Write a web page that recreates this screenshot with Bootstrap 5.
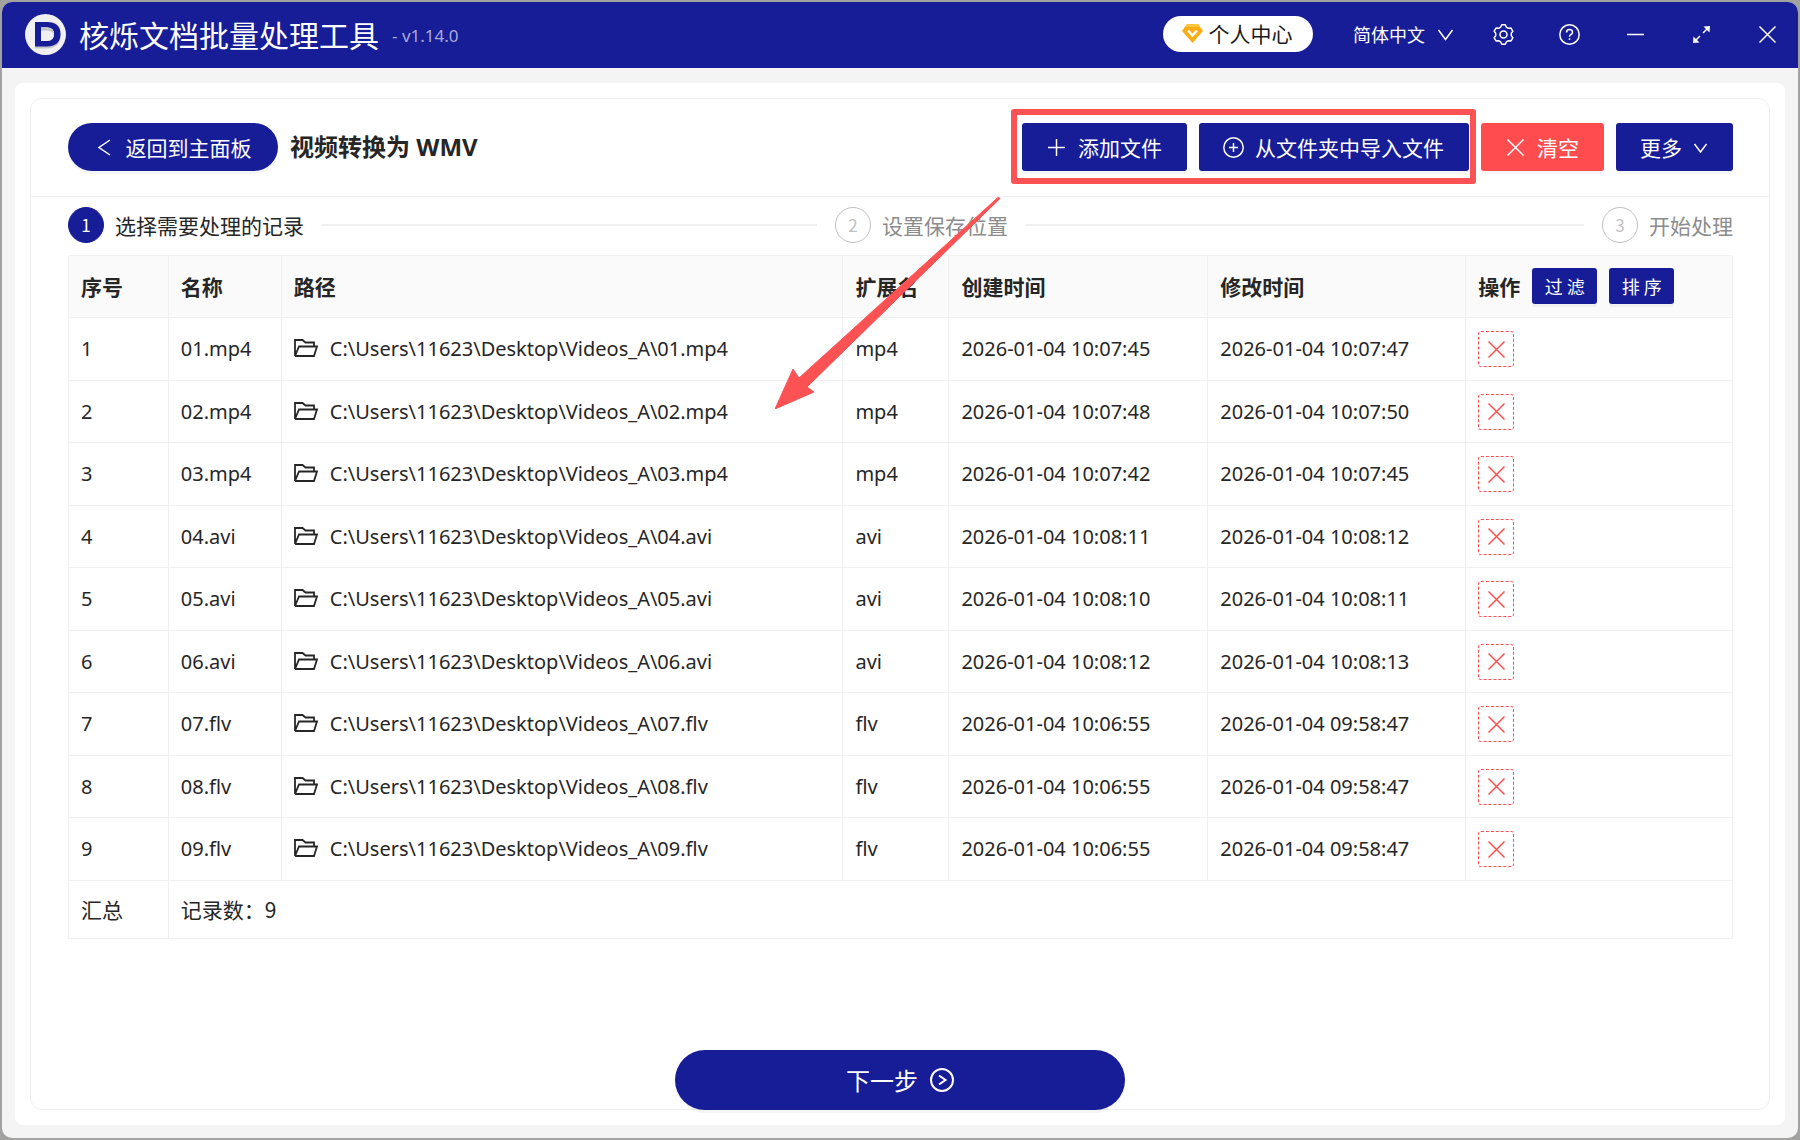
<!DOCTYPE html>
<html lang="zh-CN">
<head>
<meta charset="utf-8">
<meta name="viewport" content="width=device-width, initial-scale=1">
<title>核烁文档批量处理工具</title>
<link href="https://cdn.jsdelivr.net/npm/bootstrap@5.3.0/dist/css/bootstrap.min.css" rel="stylesheet">
<style>
:root { --brand: #171c97; --danger: #ff4d4f; --line: #f0f0f0; --ink: #262626; }
body { font-family: "Noto Sans", "Noto Sans CJK SC", sans-serif; font-size: 20px; line-height: 30px; color: var(--ink); background: #a2a2a0; padding: 2px; min-height: 100vh; display: flex; }
.zh { font-family: "Noto Sans CJK SC", sans-serif; font-size: 21px; }
svg { flex: none; display: block; fill: none; stroke: currentColor; stroke-width: 1.5; }
.app-window { background: #f4f4f4; border-radius: 10px; overflow: hidden; }
.title-bar { background: var(--brand); height: 66px; padding: 0 20px 2px 23px; }
.app-name { font-size: 30px; line-height: 40px; margin: 0 0 0 13px; font-weight: 400; }
.app-version { font-size: 17px; line-height: 24px; color: #a9abda; margin: 4px 0 0 13px; }
.member-btn { height: 36px; width: 150px; background: #fff; border: 0; border-radius: 18px; color: #1a1a1a; gap: 6px; padding: 0 2px 2px 0; }
.lang-box { margin: 0 37px 0 40px; gap: 10px; }
.lang-box select { appearance: none; background: none; border: 0; color: #fff; padding: 0; width: 72px; font-size: 18px; line-height: 28px; }
.tool-btns { gap: 45px; }
.tool-btns button { border: 0; padding: 0; background: none; color: #fff; }
.main-area { padding: 15px 13px 13px; }
.sheet { background: #fff; border-radius: 8px; padding: 15px; }
.panel { border: 1px solid var(--line); border-radius: 12px; }
.panel-top { padding: 24px 36px 25px 37px; border-bottom: 1px solid var(--line); gap: 12px; }
.panel-title { font-size: 24px; line-height: 32px; font-weight: 700; margin: 0; }
.act { height: 48px; padding: 0 24px; gap: 11px; border: 0; border-radius: 3px; color: #fff; background: var(--brand); box-shadow: 0 3px 0 rgba(0,0,0,.04); white-space: nowrap; line-height: 32px; }
.act { padding-right: 25px; }
.act-danger { background: var(--danger); }
.act-back { border-radius: 24px; min-width: 210px; }
.marked { gap: 12px; }
.marked::after { content: ""; position: absolute; inset: -14px -7px -13px -11px; border: 6px solid #fd5254; border-radius: 3px; pointer-events: none; }
.flow-steps { padding: 10px 36px 12px 37px; gap: 18px; color: #8c8c8c; }
.flow-step { gap: 11px; }
.flow-step .rule { height: 2px; background: var(--line); margin-left: 7px; }
.flow-num { width: 36px; height: 36px; border: 1px solid #bfbfbf; border-radius: 50%; font-size: 17px; color: #bfbfbf; flex: none; }
.is-active { color: var(--ink); }
.is-active .flow-num { background: var(--brand); border-color: var(--brand); color: #fff; }
.table-area { padding: 0 36px 24px 37px; }
.records { width: 100%; table-layout: fixed; border-collapse: separate; border-spacing: 0; border: 1px solid var(--line); border-width: 1px 0 0 1px; border-radius: 3px 3px 0 0; }
.records th, .records td { padding: 0 12px; border: 0 solid var(--line); border-width: 0 1px 1px 0; vertical-align: middle; white-space: nowrap; }
.records thead tr { height: 62px; }
.records th { background: #fafafa; font-weight: 700; padding-bottom: 2px; }
.records tbody tr:nth-child(odd) { height: 63px; }
.records tbody tr:nth-child(even) { height: 62px; }
.records tfoot tr { height: 58px; }
.records tfoot td { padding-bottom: 2px; }
.mini { height: 36px; width: 65px; border: 0; border-radius: 3px; background: var(--brand); color: #fff; font-size: 18px; line-height: 28px; padding: 0; box-shadow: 0 3px 0 rgba(0,0,0,.04); }
.del { width: 36px; height: 36px; border: 1px dashed var(--danger); border-radius: 3px; background: none; color: var(--danger); padding: 0; }
.path-link { color: inherit; text-decoration: none; gap: 12px; }
.path-link svg { margin-bottom: 2px; }
.next-btn { width: 450px; max-width: 100%; height: 60px; border: 0; border-radius: 30px; background: var(--brand); color: #fff; font-size: 24px; gap: 12px; margin: auto auto -1px; box-shadow: 0 3px 0 rgba(0,0,0,.04); }
.guide-arrow { position: absolute; left: 744px; top: 98px; pointer-events: none; z-index: 2; }
</style>
</head>
<body>
<svg width="0" height="0" class="position-absolute" aria-hidden="true">
  <symbol id="cross" viewBox="0 0 21 21"><path d="M2.500 2.500l16 16M18.500 2.500l-16 16"/></symbol>
  <symbol id="folder" viewBox="0 0 24 18"><path d="M20 7V3.500H11.500L8.500 1H1V17M1 17H20L23 7.500H5L1 17" stroke-width="1.8"/></symbol>
</svg>

<div class="app-window flex-grow-1 d-flex flex-column">
  <header class="title-bar d-flex align-items-center text-white">
    <svg width="41" height="41" viewBox="0 0 41 41" role="img" aria-label="Logo">
      <circle cx="20.500" cy="20.500" r="20.500" fill="#f0f0f2" stroke="none"/>
      <path d="M10 11H23Q35.500 11 35.500 22T23 34.500H10Z" fill="#c5c5c9" stroke="none"/>
      <path fill-rule="evenodd" d="M10 8H22Q35.500 8 35.500 20T22 32.500H10ZM16 13.500V27H22Q29 27 29 20T22 13.500Z" fill="#171c97" stroke="none"/>
      <path d="M16 13.500H22Q29 13.500 29 20T22 27H16Z" fill="#f0f0f2" stroke="none"/>
      <path d="M16 13.500h6q6 0 7 6q-3-3-7-3h-6z" fill="#c5c5c9" stroke="none"/>
    </svg>
    <h1 class="app-name zh">核烁文档批量处理工具</h1>
    <span class="app-version">- v1.14.0</span>
    <button class="member-btn zh ms-auto d-flex align-items-center justify-content-center">
      <svg width="21" height="19" viewBox="0 0 21 19"><path d="M5 0h11l5 7-10.500 12L0 7z" fill="#faad14" stroke="none"/><path d="M5 0h11l2 3H3z" fill="#ffc53d" stroke="none"/><path d="M6 6.500l4.500 5 4.500-5" stroke="#fff" stroke-width="2.500"/></svg>
      <span>个人中心</span>
    </button>
    <label class="lang-box d-flex align-items-center">
      <select class="zh" aria-label="语言"><option>简体中文</option></select>
      <svg width="21" height="21" viewBox="0 0 21 21"><path d="M3.500 6l7 9.500 7-9.500"/></svg>
    </label>
    <div class="tool-btns d-flex align-items-center">
      <button aria-label="设置"><svg width="21" height="21" viewBox="-10.500 -10.500 21 21"><path stroke-linejoin="round" d="M1.800-9.700L2.900-7.300L4.870-6.160L7.500-6.410L9.300-3.290L7.770-1.140V1.140L9.300 3.290L7.500 6.410L4.870 6.160L2.900 7.300L1.800 9.700H-1.800L-2.900 7.300L-4.870 6.160L-7.500 6.410L-9.300 3.290L-7.770 1.140V-1.140L-9.300-3.290L-7.500-6.410L-4.870-6.160L-2.900-7.300L-1.800-9.700Z"/><circle r="3.500"/></svg></button>
      <button aria-label="帮助"><svg width="21" height="21" viewBox="0 0 21 21"><circle cx="10.500" cy="10.500" r="9.700"/><path d="M7.500 8.500Q7.500 5.500 10.500 5.500T13.500 8.300Q13.500 10 11.500 10.800Q10.500 11.300 10.500 12.800M10.500 14.200v1.800"/></svg></button>
      <button aria-label="最小化"><svg width="21" height="21" viewBox="0 0 21 21"><path d="M2 10.500h17"/></svg></button>
      <button aria-label="最大化"><svg width="21" height="21" viewBox="0 0 21 21"><path d="M17 4l-5 5M9 12l-5 5"/><path d="M12.500 2.500L19 2l-.5 6.500zM2.500 12.500L2 19l6.500-.5z" fill="currentColor" stroke="none"/></svg></button>
      <button aria-label="关闭"><svg width="21" height="21"><use href="#cross"/></svg></button>
    </div>
  </header>

  <main class="main-area flex-grow-1 d-flex">
    <div class="sheet flex-grow-1 d-flex">
      <section class="panel flex-grow-1 d-flex flex-column position-relative">
        <div class="panel-top d-flex align-items-center">
          <button class="act act-back zh d-flex align-items-center justify-content-center">
            <svg width="21" height="21" viewBox="0 0 21 21"><path d="M16 3L5 10.500 16 18"/></svg>返回到主面板
          </button>
          <h2 class="panel-title">视频转换为 WMV</h2>
          <div class="marked d-flex position-relative ms-auto">
            <button class="act zh d-flex align-items-center"><svg width="21" height="21" viewBox="0 0 21 21"><path d="M10.500 2v17M2 10.500h17"/></svg>添加文件</button>
            <button class="act zh d-flex align-items-center"><svg width="21" height="21" viewBox="0 0 21 21"><circle cx="10.500" cy="10.500" r="9.700"/><path d="M10.500 6v9M6 10.500h9"/></svg>从文件夹中导入文件</button>
          </div>
          <button class="act act-danger zh d-flex align-items-center"><svg width="21" height="21"><use href="#cross"/></svg>清空</button>
          <button class="act zh d-flex align-items-center">更多<svg width="15" height="15" viewBox="0 0 15 15"><path d="M1.500 4l6 8 6-8"/></svg></button>
        </div>

        <div class="flow-steps zh d-flex">
          <div class="flow-step is-active d-flex align-items-center flex-fill w-100">
            <span class="flow-num d-flex align-items-center justify-content-center">1</span><span class="text-nowrap">选择需要处理的记录</span><span class="rule flex-grow-1"></span>
          </div>
          <div class="flow-step d-flex align-items-center flex-fill w-100">
            <span class="flow-num d-flex align-items-center justify-content-center">2</span><span class="text-nowrap">设置保存位置</span><span class="rule flex-grow-1"></span>
          </div>
          <div class="flow-step d-flex align-items-center flex-shrink-0">
            <span class="flow-num d-flex align-items-center justify-content-center">3</span><span class="text-nowrap">开始处理</span>
          </div>
        </div>

        <div class="table-area">
          <table class="records">
            <colgroup><col style="width:6%"><col style="width:6.79%"><col style="width:33.75%"><col style="width:6.37%"><col style="width:15.56%"><col style="width:15.5%"><col></colgroup>
            <thead class="zh">
              <tr><th>序号</th><th>名称</th><th>路径</th><th>扩展名</th><th>创建时间</th><th>修改时间</th>
              <th><div class="d-flex align-items-center" style="gap:12px">操作<button class="mini">过 滤</button><button class="mini">排 序</button></div></th></tr>
            </thead>
            <tbody>
              <tr><td>1</td><td>01.mp4</td><td><a href="#" class="path-link d-flex align-items-center"><svg width="24" height="18"><use href="#folder"/></svg>C:\Users\11623\Desktop\Videos_A\01.mp4</a></td><td>mp4</td><td>2026-01-04 10:07:45</td><td>2026-01-04 10:07:47</td><td><button class="del d-flex align-items-center justify-content-center" aria-label="删除"><svg width="21" height="21"><use href="#cross"/></svg></button></td></tr>
              <tr><td>2</td><td>02.mp4</td><td><a href="#" class="path-link d-flex align-items-center"><svg width="24" height="18"><use href="#folder"/></svg>C:\Users\11623\Desktop\Videos_A\02.mp4</a></td><td>mp4</td><td>2026-01-04 10:07:48</td><td>2026-01-04 10:07:50</td><td><button class="del d-flex align-items-center justify-content-center" aria-label="删除"><svg width="21" height="21"><use href="#cross"/></svg></button></td></tr>
              <tr><td>3</td><td>03.mp4</td><td><a href="#" class="path-link d-flex align-items-center"><svg width="24" height="18"><use href="#folder"/></svg>C:\Users\11623\Desktop\Videos_A\03.mp4</a></td><td>mp4</td><td>2026-01-04 10:07:42</td><td>2026-01-04 10:07:45</td><td><button class="del d-flex align-items-center justify-content-center" aria-label="删除"><svg width="21" height="21"><use href="#cross"/></svg></button></td></tr>
              <tr><td>4</td><td>04.avi</td><td><a href="#" class="path-link d-flex align-items-center"><svg width="24" height="18"><use href="#folder"/></svg>C:\Users\11623\Desktop\Videos_A\04.avi</a></td><td>avi</td><td>2026-01-04 10:08:11</td><td>2026-01-04 10:08:12</td><td><button class="del d-flex align-items-center justify-content-center" aria-label="删除"><svg width="21" height="21"><use href="#cross"/></svg></button></td></tr>
              <tr><td>5</td><td>05.avi</td><td><a href="#" class="path-link d-flex align-items-center"><svg width="24" height="18"><use href="#folder"/></svg>C:\Users\11623\Desktop\Videos_A\05.avi</a></td><td>avi</td><td>2026-01-04 10:08:10</td><td>2026-01-04 10:08:11</td><td><button class="del d-flex align-items-center justify-content-center" aria-label="删除"><svg width="21" height="21"><use href="#cross"/></svg></button></td></tr>
              <tr><td>6</td><td>06.avi</td><td><a href="#" class="path-link d-flex align-items-center"><svg width="24" height="18"><use href="#folder"/></svg>C:\Users\11623\Desktop\Videos_A\06.avi</a></td><td>avi</td><td>2026-01-04 10:08:12</td><td>2026-01-04 10:08:13</td><td><button class="del d-flex align-items-center justify-content-center" aria-label="删除"><svg width="21" height="21"><use href="#cross"/></svg></button></td></tr>
              <tr><td>7</td><td>07.flv</td><td><a href="#" class="path-link d-flex align-items-center"><svg width="24" height="18"><use href="#folder"/></svg>C:\Users\11623\Desktop\Videos_A\07.flv</a></td><td>flv</td><td>2026-01-04 10:06:55</td><td>2026-01-04 09:58:47</td><td><button class="del d-flex align-items-center justify-content-center" aria-label="删除"><svg width="21" height="21"><use href="#cross"/></svg></button></td></tr>
              <tr><td>8</td><td>08.flv</td><td><a href="#" class="path-link d-flex align-items-center"><svg width="24" height="18"><use href="#folder"/></svg>C:\Users\11623\Desktop\Videos_A\08.flv</a></td><td>flv</td><td>2026-01-04 10:06:55</td><td>2026-01-04 09:58:47</td><td><button class="del d-flex align-items-center justify-content-center" aria-label="删除"><svg width="21" height="21"><use href="#cross"/></svg></button></td></tr>
              <tr><td>9</td><td>09.flv</td><td><a href="#" class="path-link d-flex align-items-center"><svg width="24" height="18"><use href="#folder"/></svg>C:\Users\11623\Desktop\Videos_A\09.flv</a></td><td>flv</td><td>2026-01-04 10:06:55</td><td>2026-01-04 09:58:47</td><td><button class="del d-flex align-items-center justify-content-center" aria-label="删除"><svg width="21" height="21"><use href="#cross"/></svg></button></td></tr>
            </tbody>
            <tfoot class="zh"><tr><td>汇总</td><td colspan="6">记录数：9</td></tr></tfoot>
          </table>
        </div>

        <button class="next-btn zh d-flex align-items-center justify-content-center">下一步<svg width="24" height="24" viewBox="0 0 24 24"><g stroke-width="2"><circle cx="12" cy="12" r="11"/><path d="M9 7.500l6.500 4.500L9 16.500"/></g></svg></button>

        <svg class="guide-arrow" width="226" height="212" viewBox="0 0 226 212" aria-hidden="true"><path d="M223.500 0l1.500 1.500L32 190l7 5L0 212 18 172l6 9z" fill="#fd5254" stroke="#fd5254" stroke-width="1"/></svg>
      </section>
    </div>
  </main>
</div>
<script src="https://cdn.jsdelivr.net/npm/bootstrap@5.3.0/dist/js/bootstrap.bundle.min.js"></script>
</body>
</html>
